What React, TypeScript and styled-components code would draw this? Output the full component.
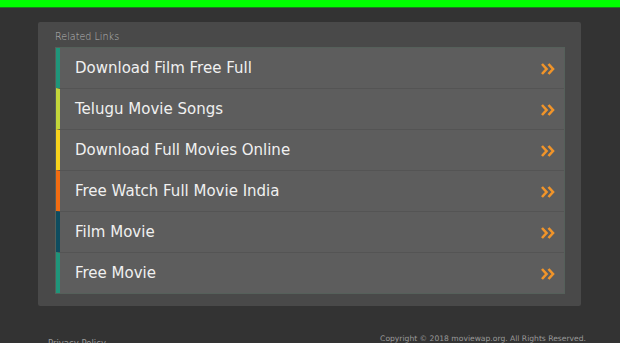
import styled, { createGlobalStyle } from 'styled-components';

// ─── Global ─────────────────────────────────────────────────────────

const Global = createGlobalStyle`
  html, body {
    margin: 0;
    padding: 0;
    background: #333333;
    font-family: "DejaVu Sans", Verdana, sans-serif;
  }
`;

// ─── Styled components ──────────────────────────────────────────────

const TopBar = styled.div`
  height: 7px;
  background: #00ff00;
  border-bottom: 1px solid #1f7a1f;
`;

const Page = styled.div`
  padding: 14px 38px 0 38px;
  width: 543px;
`;

const Panel = styled.section`
  background: #494949;
  border-radius: 2px;
  padding: 8px 16px 12px 17px;
`;

const Heading = styled.div`
  font-size: 9.6px;
  font-weight: 200;
  color: #b8b8b8;
  line-height: 13px;
  margin-bottom: 4px;
  padding-left: 0;
`;

const List = styled.ul`
  list-style: none;
  margin: 0;
  padding: 0;
  border: 1px solid #55605a;
  background: #5d5d5d;
`;

const Row = styled.li<{ $accent: string }>`
  display: flex;
  align-items: center;
  justify-content: space-between;
  height: 40px;
  padding: 0 9px 0 15px;
  border-left: 4px solid ${({ $accent }) => $accent};
  border-top: 1px solid #545454;
  color: #f0f0f0;
  font-size: 15px;

  &:first-child { border-top: none; }
`;

const Chevrons = styled.svg`
  width: 14px;
  height: 12px;
  flex: none;
  margin-top: 1px;
`;

const Footer = styled.footer`
  display: flex;
  justify-content: space-between;
  align-items: flex-start;
  padding: 28px 34px 0 48px;
  font-size: 7.6px;
  color: #9a9a9a;
`;

const FooterLink = styled.span`
  padding-top: 4px;
  font-size: 8.5px;
`;

// ─── Data ───────────────────────────────────────────────────────────

const links = [
  { text: 'Download Film Free Full', color: '#1f957a' },
  { text: 'Telugu Movie Songs', color: '#c3d63a' },
  { text: 'Download Full Movies Online', color: '#f7d21c' },
  { text: 'Free Watch Full Movie India', color: '#f26c12' },
  { text: 'Film Movie', color: '#0e4c5f' },
  { text: 'Free Movie', color: '#1f957a' },
];

// ─── Component ──────────────────────────────────────────────────────

export default function App() {
  return (
    <>
      <Global />
      <TopBar />
      <Page>
        <Panel>
          <Heading>Related Links</Heading>
          <List>
            {links.map((l) => (
              <Row key={l.text} $accent={l.color}>
                <span>{l.text}</span>
                <Chevrons viewBox="0 0 14 12">
                  <path d="M1 1 L5.5 6 L1 11" fill="none" stroke="#f0942a" strokeWidth="2.6" />
                  <path d="M7.5 1 L12 6 L7.5 11" fill="none" stroke="#f0942a" strokeWidth="2.6" />
                </Chevrons>
              </Row>
            ))}
          </List>
        </Panel>
      </Page>
      <Footer>
        <FooterLink>Privacy Policy</FooterLink>
        <span>Copyright © 2018 moviewap.org. All Rights Reserved.</span>
      </Footer>
    </>
  );
}
